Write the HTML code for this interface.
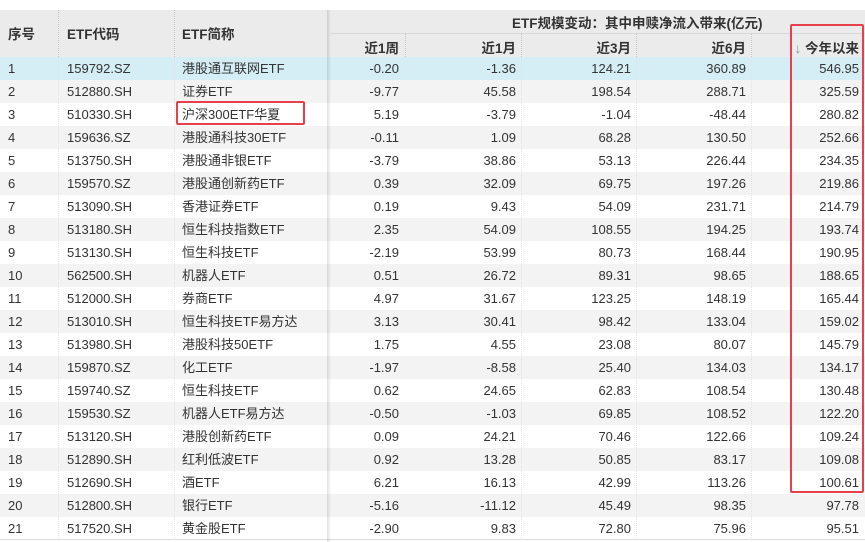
<!DOCTYPE html>
<html><head><meta charset="utf-8"><style>
*{margin:0;padding:0;box-sizing:border-box}
body{width:865px;height:542px;background:#fff;position:relative;overflow:hidden;font-family:"Liberation Sans","Noto Sans CJK SC",sans-serif;font-size:13px;color:#333}
.hd{position:absolute;top:10px;left:0;width:865px;height:47px;background:#ebebec}
.h{position:absolute;font-weight:bold;color:#333;font-size:13.5px}
.vs{position:absolute;border-left:1px dotted #c8c8c8}
.row{position:absolute;left:0;width:865px;height:23px;line-height:23px}
.row span{position:absolute;top:0;white-space:nowrap}
.r{text-align:right}
.shadow{position:absolute;top:10px;left:327px;width:4px;height:532px;background:linear-gradient(to right,rgba(0,0,0,0.12),rgba(0,0,0,0))}
.box{position:absolute;border:2.5px solid #e8404a;border-radius:2px}
</style></head><body>
<div class="hd"></div>
<div class="vs" style="left:58px;top:10px;height:47px"></div>
<div class="vs" style="left:174px;top:10px;height:47px"></div>
<div style="position:absolute;left:330px;top:33px;width:535px;border-top:1px solid #d8d8d8"></div>
<div class="vs" style="left:405px;top:33px;height:24px"></div>
<div class="vs" style="left:521px;top:33px;height:24px"></div>
<div class="vs" style="left:636px;top:33px;height:24px"></div>
<div class="vs" style="left:751px;top:33px;height:24px"></div>
<div class="h" style="left:8px;top:23px">序号</div>
<div class="h" style="left:67px;top:23px">ETF代码</div>
<div class="h" style="left:182px;top:23px">ETF简称</div>
<div class="h" style="left:512px;top:12px">ETF规模变动：其中申赎净流入带来(亿元)</div>
<div class="h" style="right:466px;top:37px">近1周</div>
<div class="h" style="right:349px;top:37px">近1月</div>
<div class="h" style="right:234px;top:37px">近3月</div>
<div class="h" style="right:119px;top:37px">近6月</div>
<div class="h" style="right:6px;top:37px"><span style="font-weight:normal;color:#888">↓</span> 今年以来</div>
<div id="rows"></div>
<script>
var d=[["159792.SZ","港股通互联网ETF","-0.20","-1.36","124.21","360.89","546.95"],
["512880.SH","证券ETF","-9.77","45.58","198.54","288.71","325.59"],
["510330.SH","沪深300ETF华夏","5.19","-3.79","-1.04","-48.44","280.82"],
["159636.SZ","港股通科技30ETF","-0.11","1.09","68.28","130.50","252.66"],
["513750.SH","港股通非银ETF","-3.79","38.86","53.13","226.44","234.35"],
["159570.SZ","港股通创新药ETF","0.39","32.09","69.75","197.26","219.86"],
["513090.SH","香港证券ETF","0.19","9.43","54.09","231.71","214.79"],
["513180.SH","恒生科技指数ETF","2.35","54.09","108.55","194.25","193.74"],
["513130.SH","恒生科技ETF","-2.19","53.99","80.73","168.44","190.95"],
["562500.SH","机器人ETF","0.51","26.72","89.31","98.65","188.65"],
["512000.SH","券商ETF","4.97","31.67","123.25","148.19","165.44"],
["513010.SH","恒生科技ETF易方达","3.13","30.41","98.42","133.04","159.02"],
["513980.SH","港股科技50ETF","1.75","4.55","23.08","80.07","145.79"],
["159870.SZ","化工ETF","-1.97","-8.58","25.40","134.03","134.17"],
["159740.SZ","恒生科技ETF","0.62","24.65","62.83","108.54","130.48"],
["159530.SZ","机器人ETF易方达","-0.50","-1.03","69.85","108.52","122.20"],
["513120.SH","港股创新药ETF","0.09","24.21","70.46","122.66","109.24"],
["512890.SH","红利低波ETF","0.92","13.28","50.85","83.17","109.08"],
["512690.SH","酒ETF","6.21","16.13","42.99","113.26","100.61"],
["512800.SH","银行ETF","-5.16","-11.12","45.49","98.35","97.78"],
["517520.SH","黄金股ETF","-2.90","9.83","72.80","75.96","95.51"]];
var h="";
for(var i=0;i<d.length;i++){var r=d[i];var bg=i==0?"#d5edf4":(i%2==1?"#f3f3f3":"#fff");
h+='<div class="row" style="top:'+(57+i*23)+'px;background:'+bg+'">'+
'<span style="left:8px">'+(i+1)+'</span>'+
'<span style="left:67px">'+r[0]+'</span>'+
'<span style="left:182px">'+r[1]+'</span>'+
'<span class="r" style="right:466px">'+r[2]+'</span>'+
'<span class="r" style="right:349px">'+r[3]+'</span>'+
'<span class="r" style="right:234px">'+r[4]+'</span>'+
'<span class="r" style="right:119px">'+r[5]+'</span>'+
'<span class="r" style="right:6px">'+r[6]+'</span></div>';}
h+='<div class="vs" style="left:58px;top:57px;height:483px;border-color:#e2e2e2"></div>';
h+='<div class="vs" style="left:174px;top:57px;height:483px;border-color:#e2e2e2"></div>';
h+='<div class="vs" style="left:521px;top:57px;height:483px;border-color:#e2e2e2"></div>';
h+='<div class="vs" style="left:636px;top:57px;height:483px;border-color:#e2e2e2"></div>';
h+='<div class="vs" style="left:751px;top:57px;height:483px;border-color:#e2e2e2"></div>';
h+='<div style="position:absolute;left:0;top:539px;width:865px;border-top:1px solid #ddd"></div>';
document.getElementById("rows").innerHTML=h;
</script>
<div class="shadow"></div>
<div class="box" style="left:176px;top:101px;width:129px;height:24px"></div>
<div class="box" style="left:790px;top:24px;width:74px;height:469px"></div>
</body></html>
